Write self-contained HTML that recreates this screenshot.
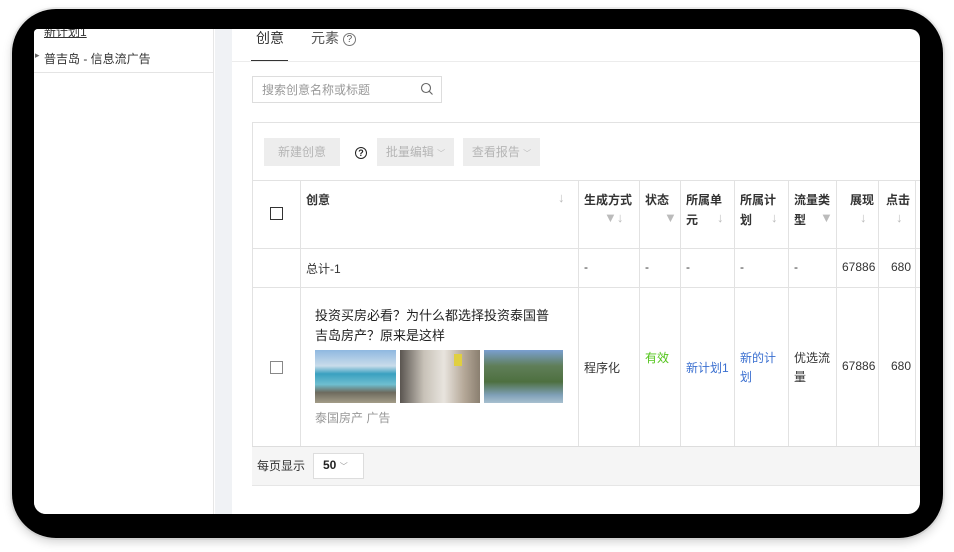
<!DOCTYPE html>
<html><head><meta charset="utf-8"><style>
*{margin:0;padding:0;box-sizing:border-box}
body{width:954px;height:552px;background:#fff;position:relative;overflow:hidden;font-family:"Liberation Sans","Noto Sans CJK SC",sans-serif;color:#333;font-size:12px}
.a{position:absolute}
.frame{left:12px;top:9px;width:931px;height:529px;background:#000;border-radius:44px;box-shadow:0 4px 10px rgba(0,0,0,.18),0 0 0 2px #f0f0f0}
.screen{left:34px;top:29px;width:886px;height:485px;background:#fff;border-radius:4px 10px 12px 12px;overflow:hidden}
.t{position:absolute;white-space:nowrap}
.hl{position:absolute;height:1px;background:#e2e2e2}
.vl{position:absolute;width:1px;background:#e2e2e2}
.g{color:#bbb;font-size:13px}
.blue{color:#3a6fd0}
.btn{position:absolute;background:#ededed;color:#b5b5b5;height:28px;line-height:28px;text-align:center;font-size:12px}
.chev{font-size:8px;color:#bbb}
</style></head><body>
<div class="a frame"></div>
<div class="a screen">
 <div class="a" style="left:0;top:0;width:180px;height:485px;background:#fff;border-right:1px solid #e6e6e6"></div>
 <div class="t" style="left:10px;top:-6px;font-size:12px;text-decoration:underline;color:#333">新计划1</div>
 <div class="t" style="left:1px;top:21px;color:#666;font-size:9px">▸</div>
 <div class="t" style="left:10px;top:21px;font-size:12px">普吉岛 - 信息流广告</div>
 <div class="hl" style="left:0;top:43px;width:180px;background:#e4e4e4"></div>
 <div class="a" style="left:181px;top:0;width:17px;height:485px;background:#f0f2f5"></div>
 <div class="t" style="left:222px;top:-1px;font-size:14px;color:#333">创意</div>
 <div class="a" style="left:217px;top:31px;width:37px;height:2px;background:#333"></div>
 <div class="t" style="left:277px;top:-1px;font-size:14px;color:#555">元素 <span style="display:inline-block;width:13px;height:13px;border:1px solid #777;border-radius:50%;font-size:10px;line-height:11px;text-align:center;vertical-align:1px">?</span></div>
 <div class="hl" style="left:198px;top:32px;width:700px;background:#ececec"></div>
 <div class="a" style="left:218px;top:47px;width:190px;height:27px;border:1px solid #ddd"></div>
 <div class="t" style="left:228px;top:52px;color:#999;font-size:12px">搜索创意名称或标题</div>
 <svg class="a" style="left:386px;top:53px" width="14" height="14" viewBox="0 0 14 14"><circle cx="6" cy="6" r="4.5" fill="none" stroke="#666" stroke-width="1.1"/><path d="M9.3 9.3L12.5 12.5" stroke="#666" stroke-width="1.1"/></svg>
 <div class="hl" style="left:218px;top:93px;width:680px"></div>
 <div class="vl" style="left:218px;top:93px;height:364px"></div>
 <div class="btn" style="left:230px;top:109px;width:76px">新建创意</div>
 <div class="a" style="left:321px;top:118px;width:12px;height:12px;border:1.3px solid #222;border-radius:50%;font-size:9px;line-height:10px;text-align:center;font-weight:bold;color:#222">?</div>
 <div class="btn" style="left:343px;top:109px;width:77px">批量编辑 <span class="chev">﹀</span></div>
 <div class="btn" style="left:429px;top:109px;width:77px">查看报告 <span class="chev">﹀</span></div>
 <div class="hl" style="left:218px;top:151px;width:680px"></div>
 <div class="hl" style="left:218px;top:219px;width:680px"></div>
 <div class="hl" style="left:218px;top:258px;width:680px"></div>
 <div class="a" style="left:218px;top:417px;width:680px;height:40px;background:#f5f5f5;border-top:1px solid #ddd;border-bottom:1px solid #e6e6e6"></div>
 <div class="vl" style="left:266px;top:151px;height:266px"></div>
 <div class="vl" style="left:544px;top:151px;height:266px"></div>
 <div class="vl" style="left:605px;top:151px;height:266px"></div>
 <div class="vl" style="left:646px;top:151px;height:266px"></div>
 <div class="vl" style="left:700px;top:151px;height:266px"></div>
 <div class="vl" style="left:754px;top:151px;height:266px"></div>
 <div class="vl" style="left:802px;top:151px;height:266px"></div>
 <div class="vl" style="left:844px;top:151px;height:266px"></div>
 <div class="vl" style="left:881px;top:151px;height:266px"></div>
 <div class="a" style="left:236px;top:178px;width:13px;height:13px;border:1.3px solid #333"></div>
 <div class="t" style="left:272px;top:162px;font-weight:bold;font-size:12px">创意</div>
 <div class="t g" style="left:524px;top:161px">↓</div>
 <div class="t" style="left:550px;top:162px;font-weight:bold">生成方式</div>
 <div class="t g" style="left:570px;top:181px">▼↓</div>
 <div class="t" style="left:611px;top:162px;font-weight:bold">状态</div>
 <div class="t g" style="left:630px;top:181px">▼</div>
 <div class="t" style="left:652px;top:162px;font-weight:bold">所属单</div>
 <div class="t" style="left:652px;top:182px;font-weight:bold">元</div>
 <div class="t g" style="left:683px;top:181px">↓</div>
 <div class="t" style="left:706px;top:162px;font-weight:bold">所属计</div>
 <div class="t" style="left:706px;top:182px;font-weight:bold">划</div>
 <div class="t g" style="left:737px;top:181px">↓</div>
 <div class="t" style="left:760px;top:162px;font-weight:bold">流量类</div>
 <div class="t" style="left:760px;top:182px;font-weight:bold">型</div>
 <div class="t g" style="left:786px;top:181px">▼</div>
 <div class="t" style="left:816px;top:162px;font-weight:bold">展现</div>
 <div class="t g" style="left:826px;top:181px">↓</div>
 <div class="t" style="left:852px;top:162px;font-weight:bold">点击</div>
 <div class="t g" style="left:862px;top:181px">↓</div>
 <div class="t" style="left:272px;top:231px">总计-1</div>
 <div class="t" style="left:550px;top:231px">-</div>
 <div class="t" style="left:611px;top:231px">-</div>
 <div class="t" style="left:652px;top:231px">-</div>
 <div class="t" style="left:706px;top:231px">-</div>
 <div class="t" style="left:760px;top:231px">-</div>
 <div class="t" style="left:808px;top:231px">67886</div>
 <div class="t" style="left:857px;top:231px">680</div>
 <div class="a" style="left:236px;top:332px;width:13px;height:13px;border:1px solid #888"></div>
 <div class="t" style="left:281px;top:277px;font-size:13px;line-height:20px;color:#222">投资买房必看？为什么都选择投资泰国普<br>吉岛房产？原来是这样</div>
 <div class="a" style="left:281px;top:321px;width:81px;height:53px;background:linear-gradient(180deg,#8fb8e0 0%,#c9dcea 30%,#3aa0c0 45%,#6fbfd0 65%,#6d6a5e 80%,#a39c88 100%)"></div>
 <div class="a" style="left:366px;top:321px;width:80px;height:53px;background:linear-gradient(90deg,#5a5550 0%,#c8c2b8 30%,#e8e4de 55%,#b5a898 80%,#8a7f70 100%)"></div>
 <div class="a" style="left:420px;top:325px;width:8px;height:12px;background:#e0cf40"></div>
 <div class="a" style="left:450px;top:321px;width:79px;height:53px;background:linear-gradient(180deg,#7a9fd0 0%,#5f7e58 30%,#4e7040 60%,#7fa0b8 85%,#a8c0d0 100%)"></div>
 <div class="t" style="left:281px;top:380px;color:#999">泰国房产 广告</div>
 <div class="t" style="left:550px;top:330px">程序化</div>
 <div class="t" style="left:611px;top:320px;color:#52c41a">有效</div>
 <div class="t blue" style="left:652px;top:330px">新计划1</div>
 <div class="t blue" style="left:706px;top:320px;line-height:19px">新的计<br>划</div>
 <div class="t" style="left:760px;top:320px;line-height:19px">优选流<br>量</div>
 <div class="t" style="left:808px;top:330px">67886</div>
 <div class="t" style="left:857px;top:330px">680</div>
 <div class="t" style="left:223px;top:428px">每页显示</div>
 <div class="a" style="left:279px;top:424px;width:51px;height:26px;background:#fff;border:1px solid #ddd"></div>
 <div class="t" style="left:289px;top:429px;font-weight:bold;color:#222">50 <span style="font-weight:normal;color:#999;font-size:8px">﹀</span></div>
</div>
</body></html>
